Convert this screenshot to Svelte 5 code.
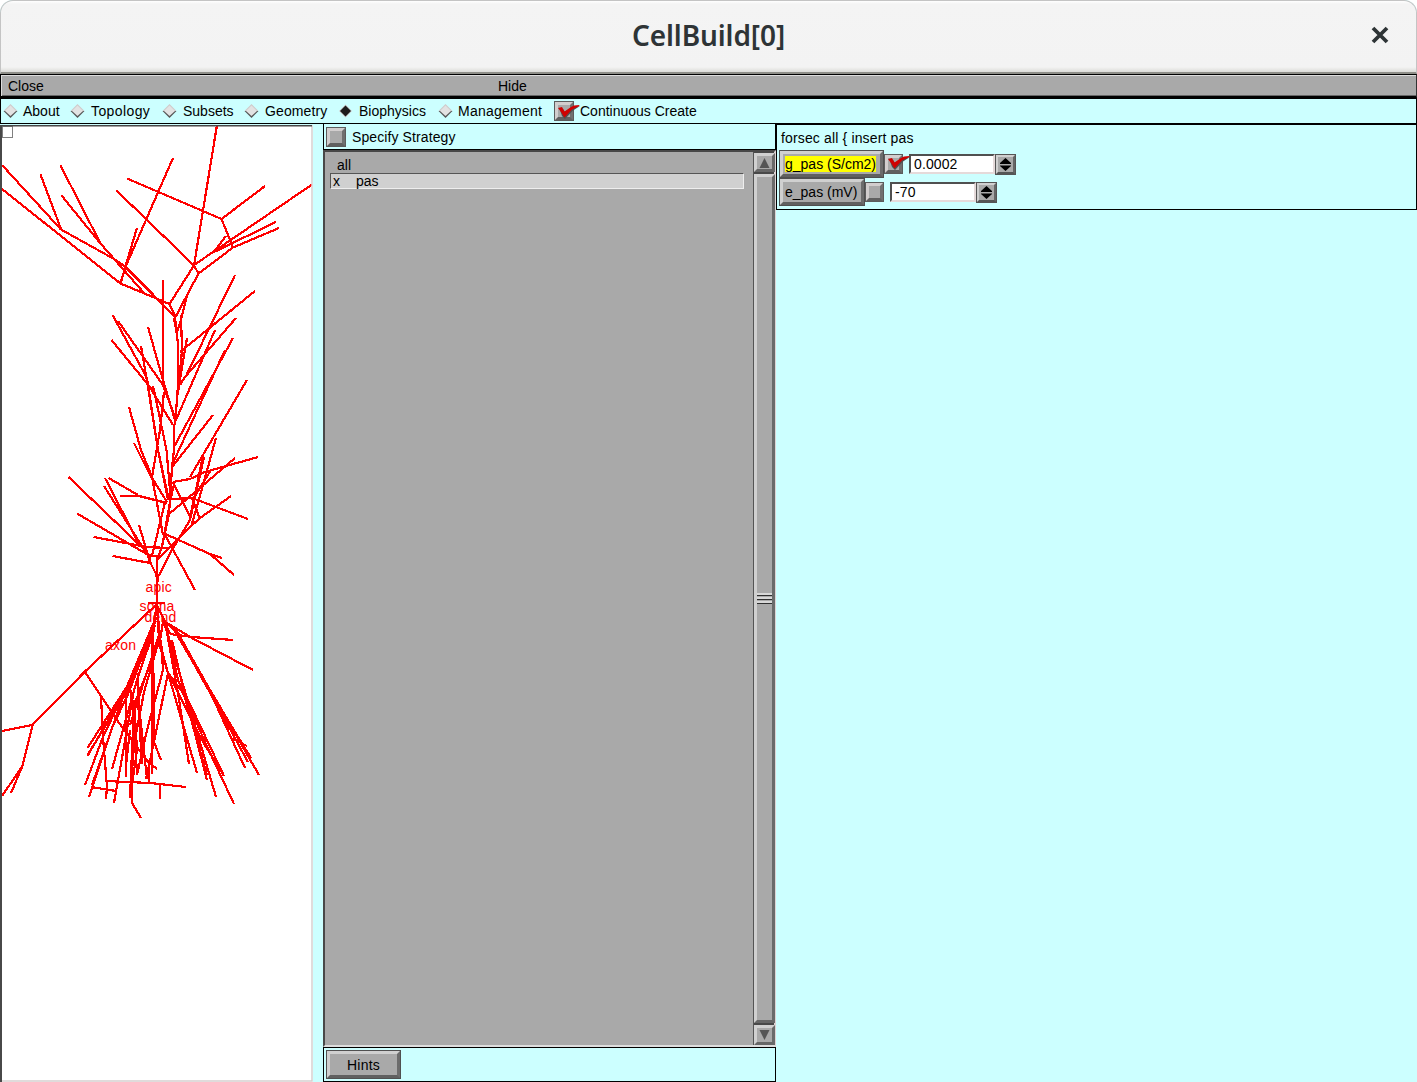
<script>
  const modes = ['About', 'Topology', 'Subsets', 'Geometry', 'Biophysics', 'Management'];
  let mode = $state('Biophysics');

  // Cell sections as x,y point runs on the shape canvas
  const apical = [
    '2,165 61,229.5 115,259.5 124,266 175,317', '2,189 120.5,283.5 169.5,304 175.5,317',
    '40.5,174.5 61,229', '60.5,165.5 100.5,243.5 144,293', '61.5,195.5 100.5,243.5',
    '120.5,283.5 125,268 173,158', '137,228 125,268', '127,178.5 221.5,219 233,247.5 198.5,273.5 175.5,317',
    '116.5,190.5 194,265.5 198.5,273.5', '217,125 194,265.5 169.5,304', '265,186 221.5,219',
    '312,184.5 216,250 194,265', '276,222 214,252', '279,228 233,247.5', '226,236 214,252',
    '115,259.5 127,268 175,317',
    '163,280 163,385', '235,275 187,374', '255,291 180,352', '236,318 185,377 180,385',
    '215,330 176,420', '233,338 174,447', '225,350 172,465', '247,380 190,477', '213,415 172,467',
    '216,438 203,485 191,527', '112.5,315 147,378 158,450 168,500', '111.5,340 150,387 154,394 173,425',
    '118,321 163,385 176,420', '148,327 163,380 175,420', '141,346 148,387 158,450 169,500',
    '153,386 159,414 166.5,450 170,490', '164,392 160,430 152,477', '129,407 141,450 152,477',
    '134,443 149,473 167,502', '175,317 178,345 178,385 175.5,420 174,427 174,450 172,467 170,500 169,514',
    '187,295 181,320 177,332', '181,315 182,350 178,395', '187,338 179,385', '174,318 177,335',
    '68.5,477 148,553', '77,513.5 150,556', '93.5,537 147,547 168,548', '112.5,556 150,563',
    '105,478 137,540 149,556', '104,486 140,543 149,556', '108.5,478 138,495',
    '119.5,496 139,496 167,503', '139,525 148,555 150,563',
    '149.5,554 150.5,563 157.5,577 157,605', '150,556 157,556 156.5,577',
    '165,502 152,556', '152,477 163,535', '169,514 162,547 157,560',
    '169,514 188,498 235,458', '258,457 205,472 190,479 173,482', '173,482 190,517',
    '172,499 192,498 248,519', '192,498 200,519', '231,496 200,518 190,527 157,560',
    '203,455 195,495 190,517', '204,457 190,520 172,550 158,577', '211,470 193,499',
    '163,533 210,554 222,558', '210,554 234,575', '164,533 195,590', '174,484 170,502 162,547'
  ];
  const axon = [
    '157,604 85,671.5 32.5,725 2,731', '32.5,725 22.5,766 2,796', '22.5,766 11,793',
    '85,672 117,720 148,762 157,769', '101,697 103,737 107,787 106,799', '106,781 150,783 186,787',
    '160,784 160,799', '149,760 149,783', '91,787 116,791'
  ];
  const basal = [
    '148,603 165,603', '157,604 154,622 128,685 87.5,748', '156,607 155,622 130,682 87.5,756',
    '155,622 128,690 88,754', '154,622 128,684 103,737 85,785', '155,622 129,692 112,728 89,797',
    '156,610 151,640 126,692 126,777', '154,630 137,680 112,769', '155,625 134,690 114,803',
    '156,618 122,700 92,785', '138,673 138,700 130,725',
    '130,687 134,720 137,775', '157,605 160,640 146,675 134,705 130,798',
    '160,637 144,692 134,745 130,798', '159,635 138,700 142,764',
    '152,625 152,774', '153,625 154,742 161,760', '154,705 152,757', '138,680 140,715 147,779',
    '161,640 163,670 147,730 137,775', '168,673 154,742 146,779',
    '134,700 137,750 132,785 132,803 141,818', '130,730 126,765', '133,750 131,798',
    '157,605 159,640 168,673 197,773', '158,640 168,673 187,698 224,776',
    '157,605 165,622 178,693 189,764', '165,622 178,680 187,703 207,780', '172,640 187,705 207,775',
    '164,622 187,698 216,797', '178,680 205,742 234,804', '168,673 203,742 224,776',
    '165,622 177,632 207,685 245,768', '175,628 210,690 259,775', '173,628 208,688 251,758',
    '176,632 213,698 248,762', '178,633 207,685 247,752', '231,738 247,746',
    '233,640 192,637 170,634', '253,670 192,638 167,623', '157,605 165,622 170,634',
    '163,617 163,622 160,640'
  ];
  const sections = [...apical, ...axon, ...basal];
  const labels = [
    { name: 'apic', x: 145.5, y: 592 },
    { name: 'soma', x: 139.5, y: 611 },
    { name: 'dend', x: 144.5, y: 622 },
    { name: 'axon', x: 105, y: 650 }
  ];
  const params = [
    { name: 'g_pas (S/cm2)', value: '0.0002', changed: true },
    { name: 'e_pas (mV)', value: '-70', changed: false }
  ];
</script>

{#snippet tick()}
  <svg class="tick" width="27" height="20" viewBox="0 0 27 20">
    <path d="M6 8 L9 7 L11 10 L18 5.5 L26 4 L19 8.5 L11 17 L8 14 Z" fill="#505050" />
    <path d="M4 6 L8 5 L10.5 9.5 L17 5 L20 3.5 L25.5 3 L25 4.2 L18 7.5 L10.5 15.5 L7 10 Z" fill="#d00000" />
  </svg>
{/snippet}

<div class="window">
  <header>
    <h1>CellBuild[0]</h1>
    <button class="close" aria-label="Close window">
      <svg width="18" height="18" viewBox="0 0 18 18"><path d="M2 2 L16 16 M16 2 L2 16" stroke="#2e3436" stroke-width="3.8" /></svg>
    </button>
  </header>
  <nav class="panelbar"><span>Close</span><span>Hide</span></nav>
  <div class="modes">
    {#each modes as m}
      <button class="mode" onclick={() => (mode = m)}>
        <svg width="15" height="14" viewBox="0 0 15 14">
          {#if mode === m}
            <path d="M7.5 .5 L14 7 L7.5 13.5 L1 7 Z" fill="#d0cccc" />
            <path d="M7.5 1.5 L13 7 L7.5 12.5 L2 7 Z" fill="#1c1c1c" />
          {:else}
            <path d="M.5 7 L7.5 0 L14.5 7 Z" fill="#cfcaca" />
            <path d="M.5 7 L7.5 14 L14.5 7 Z" fill="#555" />
            <path d="M7.5 1.6 L13 7 L7.5 12 L2 7 Z" fill="#e2e2e2" />
          {/if}
        </svg>
        {m}
      </button>
    {/each}
    <span class="mode"><i class="box big">{@render tick()}</i><span>Continuous Create</span></span>
  </div>
  <main>
    <svg class="shape" width="313" height="957" viewBox="0 125 313 957">
      <rect x="0" y="125" width="313" height="957" fill="#fff" />
      <g fill="none" stroke="#f00" stroke-width="2.2" shape-rendering="crispEdges">
        {#each sections as points}<polyline {points} />{/each}
      </g>
      <g fill="#f00">
        {#each labels as l}<text x={l.x} y={l.y}>{l.name}</text>{/each}
      </g>
      <rect x="2.5" y="126.5" width="10" height="11" fill="#fff" stroke="#808080" />
      <path d="M312 125 V1081 H0" fill="none" stroke="#d6d0d0" stroke-width="1.5" />
      <path d="M1 1082 V125.5 H312" fill="none" stroke="#484848" stroke-width="2" />
    </svg>
    <section class="strategy">
      <div class="specify"><i class="box big"></i>Specify Strategy</div>
      <div class="browser">
        <div class="list">
          <div class="row">all</div>
          <div class="row selected"><span>x</span>pas</div>
        </div>
        <div class="scroll">
          <span class="arrow"><svg width="11" height="10" viewBox="0 0 11 10"><path d="M5.5 0 L10.5 10 H.5 Z" fill="#555" /></svg></span>
          <span class="thumb"><i></i><i></i><i></i></span>
          <span class="arrow"><svg width="11" height="10" viewBox="0 0 11 10"><path d="M5.5 10 L10.5 0 H.5 Z" fill="#555" /></svg></span>
        </div>
      </div>
      <div class="foot"><button class="raised hints">Hints</button></div>
    </section>
    <section class="params">
      <div class="forsec">forsec all &#123; insert pas</div>
      {#each params as p}
        <div class="param">
          <button class="raised name"><span class:changed={p.changed}>{p.name}</span></button>
          <i class="box">{#if p.changed}{@render tick()}{/if}</i>
          <span class="value">{p.value}</span>
          <span class="spin"><svg width="13" height="13" viewBox="0 0 13 13"><path d="M6.5 0 L12 5 V6 H1 V5 Z M6.5 13 L12 8 V7.5 H1 V8 Z" fill="#000" /></svg></span>
        </div>
      {/each}
    </section>
  </main>
</div>

<style>
  :global(body) { background: #fff; }
  .window, .window * { box-sizing: border-box; }
  .window {
    width: 1417px; height: 1082px; overflow: hidden;
    display: grid; grid-template-rows: 74px 24px 26px 1fr;
    font: 14px/16px "Liberation Sans", Arial, sans-serif; color: #000; background: #cff;
  }
  button { font: inherit; color: inherit; border: 0; padding: 0; background: none; }
  header {
    display: grid; grid-template-columns: 1fr auto 1fr; align-items: center; padding-bottom: 3px;
    border: 1px solid #c4c4c4; border-bottom: 2px solid #8e8e88; border-radius: 13px 13px 0 0;
    background: linear-gradient(#fff 0, #f4f4f4 3px, #f3f3f3 66px, #dcdcd8 71px);
    box-shadow: 0 0 0 20px #fff; position: relative;
  }
  h1 { grid-column: 2; margin: 0; font: 600 28px/40px "Noto Sans", sans-serif; letter-spacing: -.1px; color: #2e3436; }
  .close { justify-self: end; margin-right: 27px; height: 18px; }
  svg { display: block; }
  .panelbar {
    position: relative; display: grid; grid-template-columns: 490px 1fr; align-items: center; padding-left: 7px;
    background: #a9a9a9; border: 1px solid #000; border-bottom-width: 2px; border-right-color: #333;
    box-shadow: inset 1px 1px #ddd, inset 0 -1px #666;
  }
  .modes {
    position: relative; background: #cff; border: 1px solid #000; padding-left: 2px;
    display: grid; grid-template-columns: 67px 92px 82px 94px 100px 116px auto; align-items: center; justify-content: start;
  }
  .mode { display: flex; align-items: center; gap: 6px; white-space: nowrap; }
  .mode:nth-child(1), .mode:nth-child(6) { gap: 5px; }
  .mode:nth-child(2) { letter-spacing: .4px; }
  .mode:nth-child(4) { letter-spacing: .1px; }
  .mode:nth-child(6) { letter-spacing: .25px; }
  .box {
    position: relative; flex: none; width: 17px; height: 18px; margin: 1px; background: #a9a9a9;
    border: 3px solid; border-color: #d2cece #707070 #606060 #d2cece; box-shadow: 0 0 0 1px #5c5c5c;
  }
  .box.big { width: 18px; height: 18px; }
  .tick { position: absolute; left: -4px; top: -5px; }
  .big .tick { top: -3px; }
  main { display: grid; grid-template-columns: 323px 453px 1fr; min-height: 0; }
  .shape { margin-top: 1px; }
  .shape text { font: 14px "Liberation Sans", Arial, sans-serif; letter-spacing: .2px; }
  .strategy { display: grid; grid-template-rows: 26px 897px 35px; }
  .specify { border: 1px solid #000; border-top: 0; display: flex; align-items: center; padding-left: 2px; gap: 6px; letter-spacing: .1px; }
  .browser {
    background: #a9a9a9; border: 2px solid; border-color: #484848 #ddd4d4 #ddd #484848;
    display: grid; grid-template-columns: 1fr 20px;
  }
  .list { padding: 5px 10px 0 5px; }
  .row { height: 16px; padding-left: 6px; border: 1px solid transparent; line-height: 15px; }
  .selected { padding-left: 2px; display: grid; grid-template-columns: 23px 1fr; background: #d0d0d0; border-color: #555 #eee #eee #555; }
  .scroll { display: grid; grid-template-rows: 19px 1fr 20px; gap: 2px; padding: 1px 1px 0 0; box-shadow: -1px 0 #555; background: #484848; }
  .arrow, .thumb { background: #a9a9a9; border: 3px solid; border-color: #d0d0d0 #6a6a6a #666 #d0d0d0; display: grid; place-items: center; }
  .thumb { align-content: center; gap: 1px; padding-top: 0; }
  .thumb i { width: 15px; height: 3px; background: #303030; border-top: 2px solid #d8d8d8; }
  .foot { border: 1px solid #000; padding: 3px; display: flex; }
  .raised {
    background: #a9a9a9; border: 3px solid; border-color: #d0d0d0 #6c6c6c #606060 #d0d0d0;
    box-shadow: 0 0 0 1px #505050; margin: 0;
  }
  .hints { width: 73px; height: 27px; letter-spacing: .2px; }
  .params { height: 86px; border: 1px solid #000; padding: 4px 0 0 3px; }
  .forsec { height: 21px; padding-left: 1px; line-height: 18px; letter-spacing: .15px; }
  .param { height: 28px; display: flex; align-items: center; }
  .name { height: 26px; width: 103px; white-space: nowrap; display: flex; align-items: center; padding-left: 2px; }
  .param:last-child .name { width: 84px; }
  .name span { display: inline-block; }
  .changed { background: #ff0; }
  .param .box { margin-left: 2px; }
  .value { margin-left: 6px; width: 86px; height: 20px; background: #fff; border: 2px solid; border-color: #505050 #e5dada #e5dada #505050; padding-left: 3px; line-height: 16px; letter-spacing: .1px; }
  .spin { width: 19px; height: 19px; margin-left: 1px; background: #a9a9a9; border: 2px solid; border-color: #d0d0d0 #666 #555 #d0d0d0; box-shadow: 0 0 0 1px #555; display: grid; place-items: center; }
</style>
